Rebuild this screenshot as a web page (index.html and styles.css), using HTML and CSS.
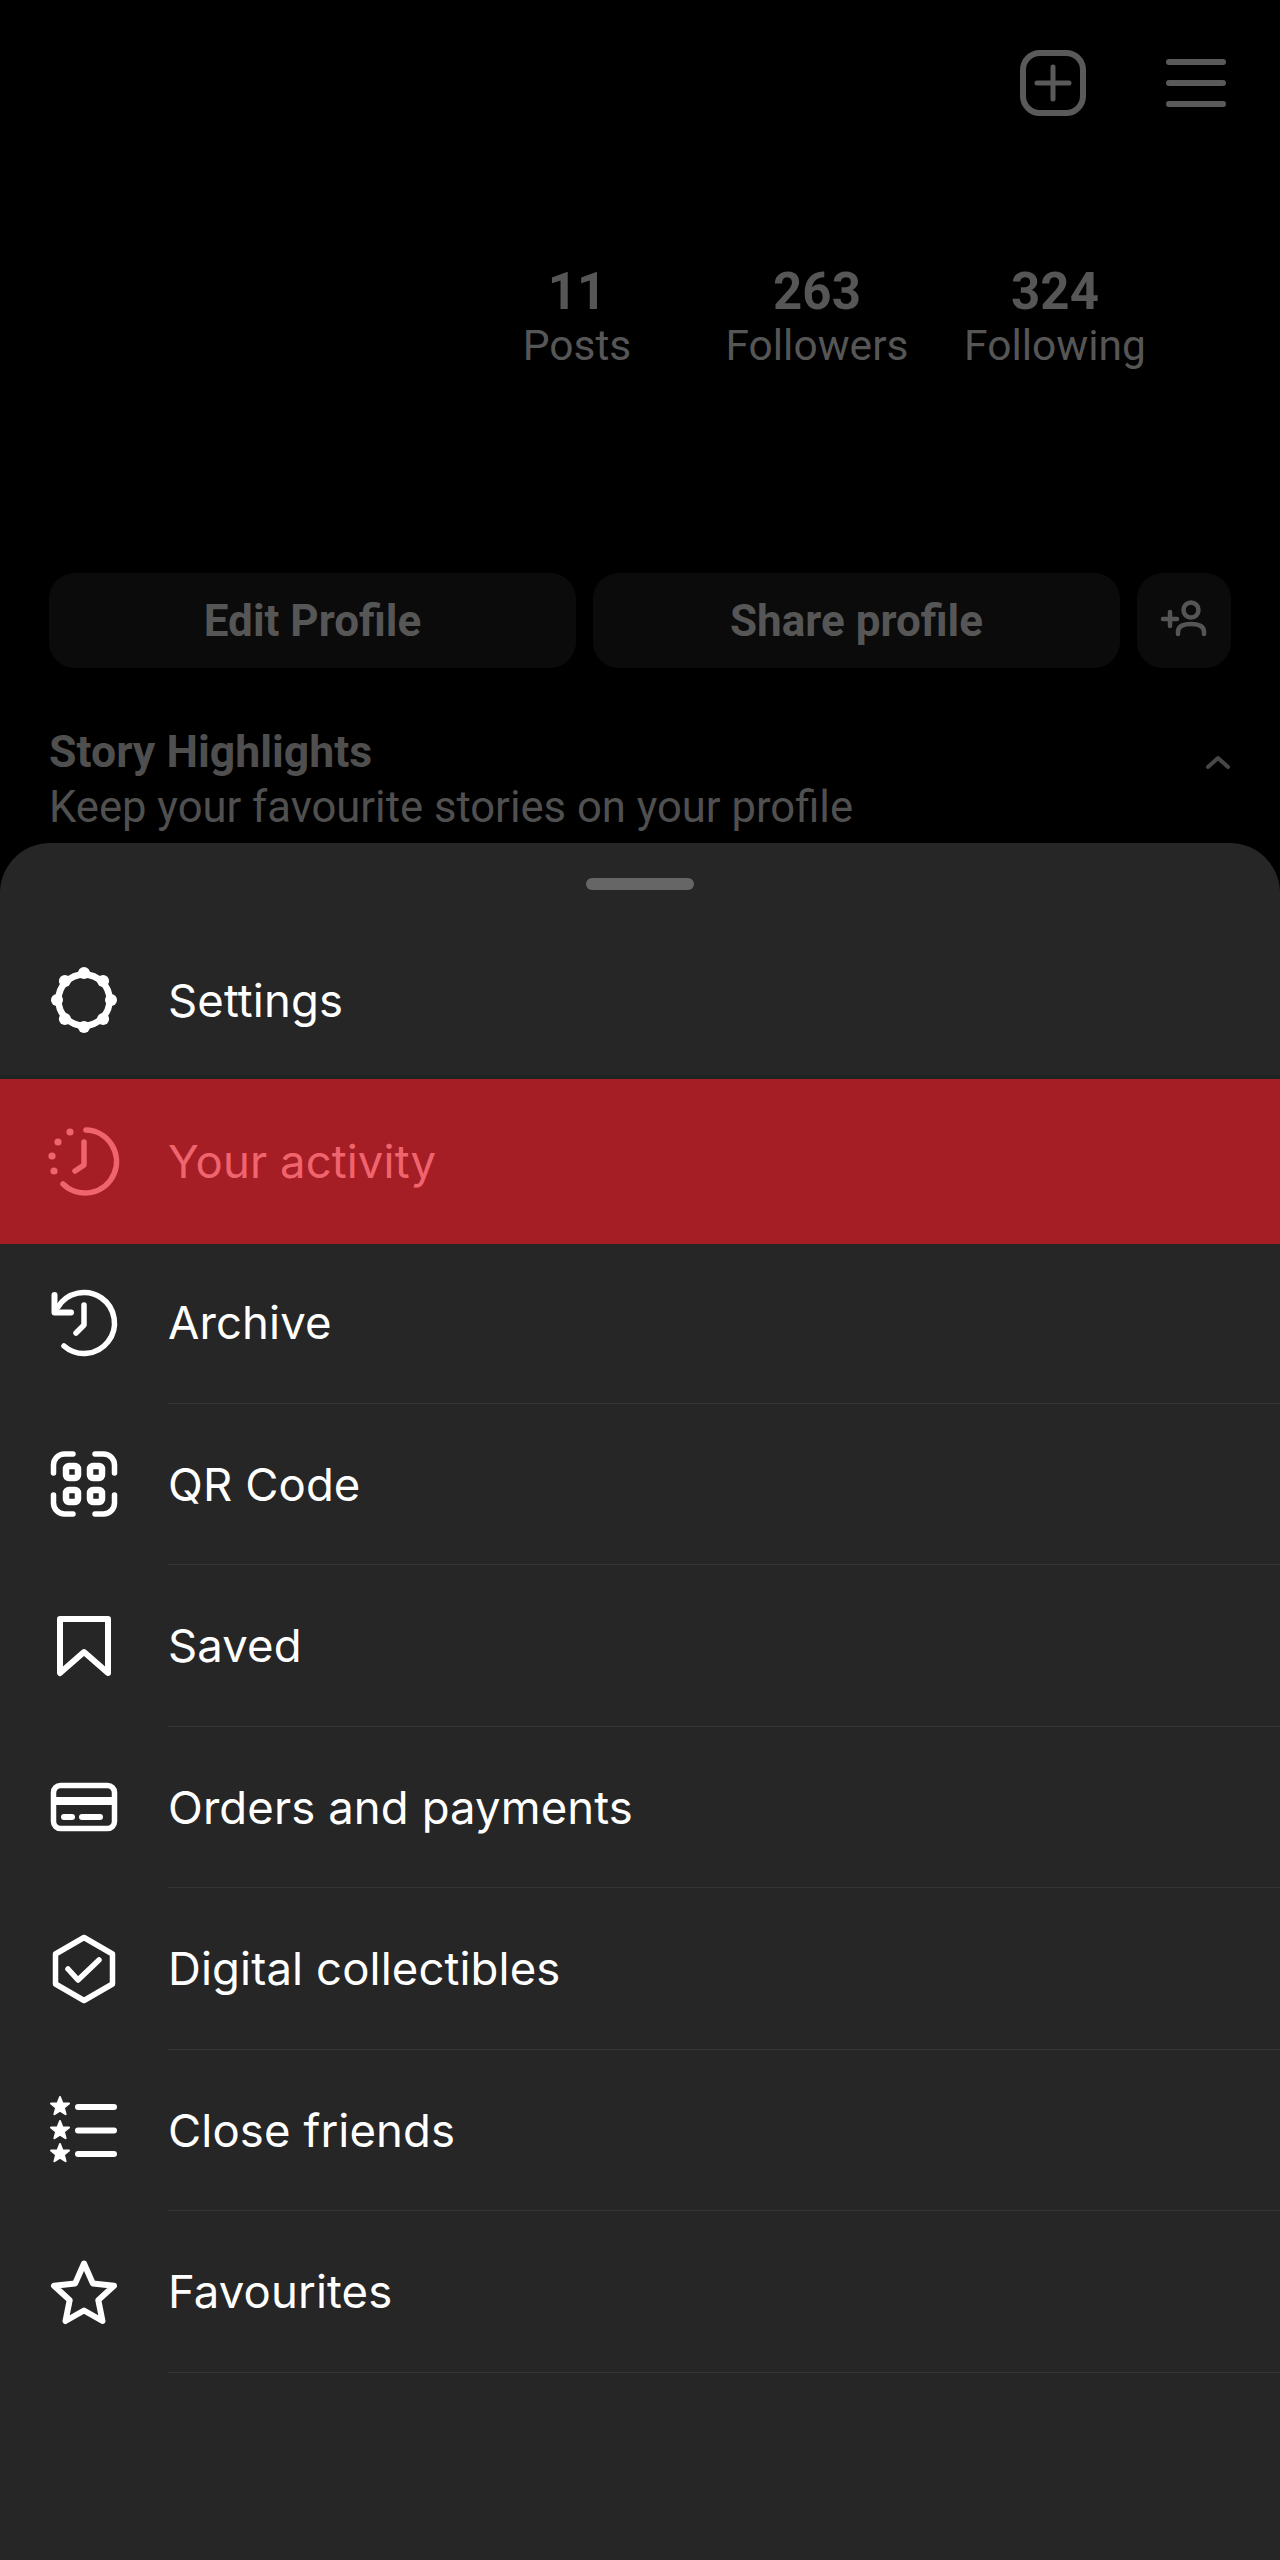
FILE: index.html
```html
<!DOCTYPE html>
<html lang="en">
<head>
<meta charset="utf-8">
<title>Profile menu</title>
<link rel="stylesheet" href="styles.css">
</head>
<body>
<div class="page">
  <section class="profile">
    <div class="topbar">
      <svg class="ic-add" viewBox="0 0 66 66" fill="none" stroke="#5a5a5a" stroke-linecap="round"><rect x="3" y="3" width="60" height="60" rx="17" stroke-width="6"/><path d="M33 17V49M17 33H49" stroke-width="5"/></svg>
      <svg class="ic-menu" viewBox="0 0 60 48" fill="none" stroke="#5a5a5a" stroke-width="6" stroke-linecap="round"><path d="M3 3H57M3 24H57M3 45H57"/></svg>
    </div>
    <div class="stats">
      <div class="stat stat-posts"><b>11</b><span>Posts</span></div>
      <div class="stat stat-followers"><b>263</b><span>Followers</span></div>
      <div class="stat stat-following"><b>324</b><span>Following</span></div>
    </div>
    <div class="actions">
      <div class="btn btn-wide">Edit Profile</div>
      <div class="btn btn-wide">Share profile</div>
      <div class="btn btn-icon">
        <svg viewBox="0 0 48 44" width="48" height="44" fill="none" stroke="#555" stroke-width="4.5" stroke-linecap="round"><circle cx="31" cy="11" r="7.5"/><path d="M18 35V33C18 27 23 25 31 25S44 27 44 33V35"/><path d="M3 20H17M10 13V27"/></svg>
      </div>
    </div>
    <div class="highlights">
      <div>
        <h2>Story Highlights</h2>
        <p>Keep your favourite stories on your profile</p>
      </div>
      <svg class="chev" viewBox="0 0 26 14" fill="none" stroke="#474747" stroke-width="4" stroke-linecap="round" stroke-linejoin="round"><path d="M3 12L13 3L23 12"/></svg>
    </div>
  </section>

  <section class="sheet">
    <div class="handle"></div>

    <div class="row">
      <svg class="ic" viewBox="0 0 80 80"><circle cx="40" cy="40" r="25.6" fill="none" stroke="#fff" stroke-width="6.5"/><g fill="#fff"><circle cx="40" cy="13" r="6"/><circle cx="40" cy="67" r="6"/><circle cx="13" cy="40" r="6"/><circle cx="67" cy="40" r="6"/><circle cx="20.9" cy="20.9" r="6"/><circle cx="59.1" cy="20.9" r="6"/><circle cx="20.9" cy="59.1" r="6"/><circle cx="59.1" cy="59.1" r="6"/></g></svg>
      <div class="label plain">Settings</div>
    </div>

    <div class="row row-active">
      <svg class="ic" viewBox="0 0 80 80" fill="none" stroke="#f0646e" stroke-width="5.5" stroke-linecap="round" stroke-linejoin="round"><path d="M42 9A31.5 31.5 0 1 1 19 63"/><path d="M40 21V44L31 50"/><g fill="#f0646e" stroke="none"><circle cx="26" cy="11" r="3.6"/><circle cx="14" cy="21" r="3.6"/><circle cx="8" cy="35" r="3.6"/><circle cx="10" cy="50" r="3.6"/></g></svg>
      <div class="label plain">Your activity</div>
    </div>

    <div class="row">
      <svg class="ic" viewBox="0 0 80 80" fill="none" stroke="#fff" stroke-width="5.5" stroke-linecap="round" stroke-linejoin="round"><path d="M14 24A30.5 30.5 0 1 1 20 63"/><path d="M10.5 12V29.5H27" stroke-width="6"/><path d="M40 22V42L32 50"/></svg>
      <div class="label">Archive</div>
    </div>

    <div class="row">
      <svg class="ic" viewBox="0 0 80 80" fill="none" stroke="#fff" stroke-width="5.5" stroke-linecap="round"><path d="M9.5 29V21A11 11 0 0 1 20.5 10H29M51 10H59.5A11 11 0 0 1 70.5 21V29M9.5 51V59A11 11 0 0 0 20.5 70H29M51 70H59.5A11 11 0 0 0 70.5 59V51"/><g stroke-width="6.5"><rect x="22" y="22" width="12" height="12" rx="3"/><rect x="46" y="22" width="12" height="12" rx="3"/><rect x="22" y="46" width="12" height="12" rx="3"/><rect x="46" y="46" width="12" height="12" rx="3"/></g></svg>
      <div class="label">QR Code</div>
    </div>

    <div class="row">
      <svg class="ic" viewBox="0 0 80 80" fill="none" stroke="#fff" stroke-width="6" stroke-linejoin="round"><path d="M16 13H64V67L40 46L16 67Z"/></svg>
      <div class="label">Saved</div>
    </div>

    <div class="row">
      <svg class="ic" viewBox="0 0 80 80"><rect x="9.5" y="18.5" width="61" height="43" rx="7" fill="none" stroke="#fff" stroke-width="5.5"/><rect x="8" y="30" width="64" height="8" fill="#fff"/><rect x="17" y="47" width="14" height="6" rx="3" fill="#fff"/><rect x="35" y="47" width="24" height="6" rx="3" fill="#fff"/></svg>
      <div class="label">Orders and payments</div>
    </div>

    <div class="row">
      <svg class="ic" viewBox="0 0 80 80" fill="none" stroke="#fff" stroke-width="5.5" stroke-linecap="round" stroke-linejoin="round"><path d="M40 8.5L68.5 25V55L40 71.5L11.5 55V25Z"/><path d="M24 40L34 51L55 31"/></svg>
      <div class="label">Digital collectibles</div>
    </div>

    <div class="row">
      <svg class="ic" viewBox="0 0 80 80"><g fill="#fff" stroke="#fff" stroke-width="2" stroke-linejoin="round"><path d="M16 7L18.4 13.2L25 13.6L19.9 17.8L21.6 24.2L16 20.6L10.4 24.2L12.1 17.8L7 13.6L13.6 13.2Z"/><path d="M16 31L18.4 37.2L25 37.6L19.9 41.8L21.6 48.2L16 44.6L10.4 48.2L12.1 41.8L7 37.6L13.6 37.2Z"/><path d="M16 54L18.4 60.2L25 60.6L19.9 64.8L21.6 71.2L16 67.6L10.4 71.2L12.1 64.8L7 60.6L13.6 60.2Z"/></g><path d="M34 17H70M34 40.5H70M34 64H70" fill="none" stroke="#fff" stroke-width="6" stroke-linecap="round"/></svg>
      <div class="label">Close friends</div>
    </div>

    <div class="row">
      <svg class="ic" viewBox="0 0 80 80" fill="none" stroke="#fff" stroke-width="6" stroke-linejoin="round"><path d="M40 11.5L48.8 31.4L70 33.8L54.3 48.1L58.5 69L40 58.5L21.5 69L25.7 48.1L10 33.8L31.2 31.4Z"/></svg>
      <div class="label">Favourites</div>
    </div>
  </section>
</div>
</body>
</html>
```
FILE: styles.css
```css
* { box-sizing: border-box; }
html, body { margin: 0; padding: 0; background: #000; }
body { font-family: "Inter", "Liberation Sans", sans-serif; }
.page { width: 1280px; height: 2560px; overflow: hidden; display: flex; flex-direction: column; }

.profile { height: 843px; padding: 50px 49px 0; color: #5a5a5a; }
.topbar { display: flex; justify-content: flex-end; align-items: center; height: 65px; padding-right: 5px; gap: 80px; }
.ic-add { width: 66px; height: 66px; }
.ic-menu { width: 60px; height: 48px; }

.stats { display: flex; height: 108px; margin-top: 149px; padding-left: 428px; font-family: "Roboto", sans-serif; }
.stat { display: flex; flex-direction: column; align-items: center; width: 240px; }
.stat b { font-size: 51px; line-height: 56px; font-weight: 700; color: #565656; }
.stat span { font-size: 42.5px; line-height: 52px; color: #565656; }
.stat-posts { width: 200px; }
.stat-followers { margin-left: 20px; margin-right: -2px; }

.actions { display: flex; gap: 17px; margin-top: 201px; }
.btn { height: 95px; border-radius: 26px; background: #0b0b0b; display: flex; align-items: center; justify-content: center; font-family: "Roboto", sans-serif; font-size: 44px; font-weight: 700; color: #565656; }
.btn-wide { width: 527px; }
.btn-icon { width: 94px; }

.highlights { display: flex; justify-content: space-between; align-items: flex-start; margin-top: 56px; font-family: "Roboto", sans-serif; }
.highlights h2 { margin: 0; font-size: 44.6px; line-height: 56px; font-weight: 700; color: #4f4f4f; }
.highlights p { margin: 0; font-size: 43.6px; line-height: 55px; color: #505050; }
.chev { width: 26px; height: 14px; margin-top: 31px; }

.sheet { flex: 1; background: #262626; border-radius: 50px 50px 0 0; padding-top: 35px; }
.handle { width: 108px; height: 12px; border-radius: 6px; background: #666; margin: 0 auto 29px; }

.row { display: flex; align-items: stretch; height: 161.5px; padding-left: 44px; color: #fff; }
.ic { width: 80px; height: 80px; align-self: center; flex: none; }
.label { flex: 1; margin-left: 44px; padding-top: 1px; display: flex; align-items: center; font-size: 45.5px; letter-spacing: 0.1px; border-bottom: 1.5px solid #343434; }
.label.plain { border-bottom: 0; }
.row-active { height: 165px; margin: -2px 0 -1.5px; background: #a51e25; color: #f0646e; box-shadow: 0 -4px 0 #1f2222; }
```
